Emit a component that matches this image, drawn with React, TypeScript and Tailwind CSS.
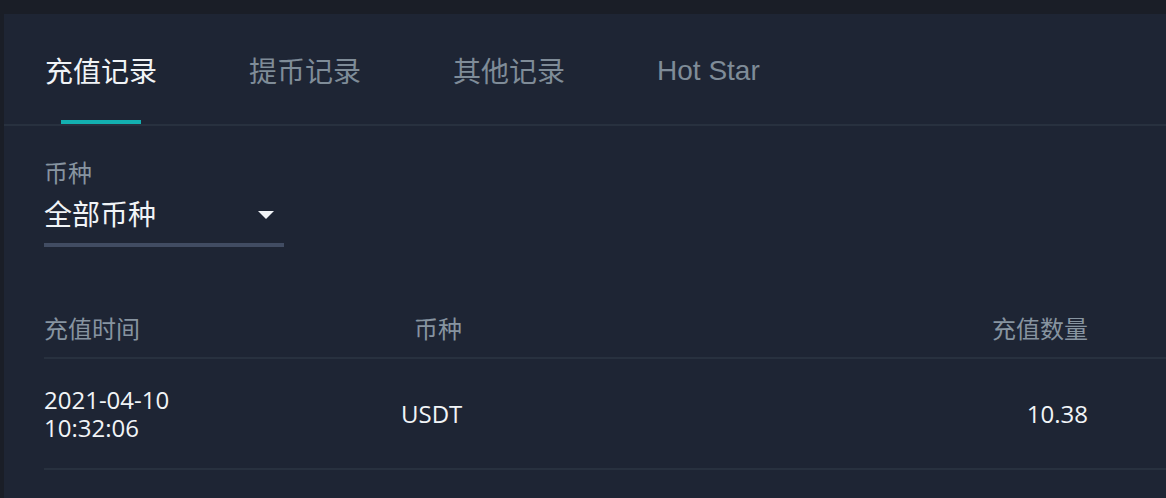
const tabs = ['充值记录', '提币记录', '其他记录', 'Hot Star'];

const cjk = { fontFamily: '"Noto Sans", "Noto Sans CJK SC", sans-serif' };

export default function App() {
  return (
    <div className="min-h-[498px] bg-[#1a1e27] pl-[4px] pt-[14px]" style={cjk}>
      <div className="min-h-[484px] bg-[#1e2534]">
        {/* tabs */}
        <div className="flex gap-[92px] border-b-2 border-[#28313f] pl-[41px]">
          {tabs.map((t, i) => (
            <div key={t} className="relative flex h-[110px] items-center pt-[3px]">
              <span
                className={`text-[28px] leading-[36px] ${i === 0 ? 'text-[#f1f4f7]' : 'text-[#7f8c98]'}`}
                style={t === 'Hot Star' ? { fontFamily: '"Liberation Sans", Arial, sans-serif' } : undefined}
              >
                {t}
              </span>
              {i === 0 && (
                <div className="absolute bottom-0 left-1/2 h-[4px] w-[80px] -translate-x-1/2 bg-[#13b0b0]" />
              )}
            </div>
          ))}
        </div>

        <div className="pl-[40px]">
          {/* filter */}
          <div className="mt-[35px] text-[24px] leading-[24px] text-[#8794a0]">币种</div>
          <div className="flex h-[62px] w-[240px] items-center justify-between border-b-4 border-[#414c62] pr-[10px]">
            <span className="text-[28px] leading-[36px] text-[#f1f4f7]">全部币种</span>
            <svg width="16" height="8" viewBox="0 0 16 8" className="mt-[2px]">
              <path d="M0 0H16L8 8Z" fill="#f1f4f7" />
            </svg>
          </div>

          {/* table */}
          <div className="grid h-[112px] grid-cols-[357px_200px_1fr] items-end border-b-2 border-[#28313f] pb-[16px] text-[24px] leading-[24px] text-[#8794a0]">
            <span>充值时间</span>
            <span className="pl-[13px]">币种</span>
            <span className="pr-[78px] text-right">充值数量</span>
          </div>
          <div
            className="grid h-[111px] grid-cols-[357px_200px_1fr] items-center border-b-2 border-[#28313f] pt-[1px] text-[24px] leading-[28px] text-[#f1f4f7]"
            style={{ fontFamily: '"Open Sans", "Noto Sans CJK SC", sans-serif' }}
          >
            <span>
              2021-04-10
              <br />
              10:32:06
            </span>
            <span>USDT</span>
            <span className="pr-[78px] text-right">10.38</span>
          </div>
        </div>
      </div>
    </div>
  );
}
